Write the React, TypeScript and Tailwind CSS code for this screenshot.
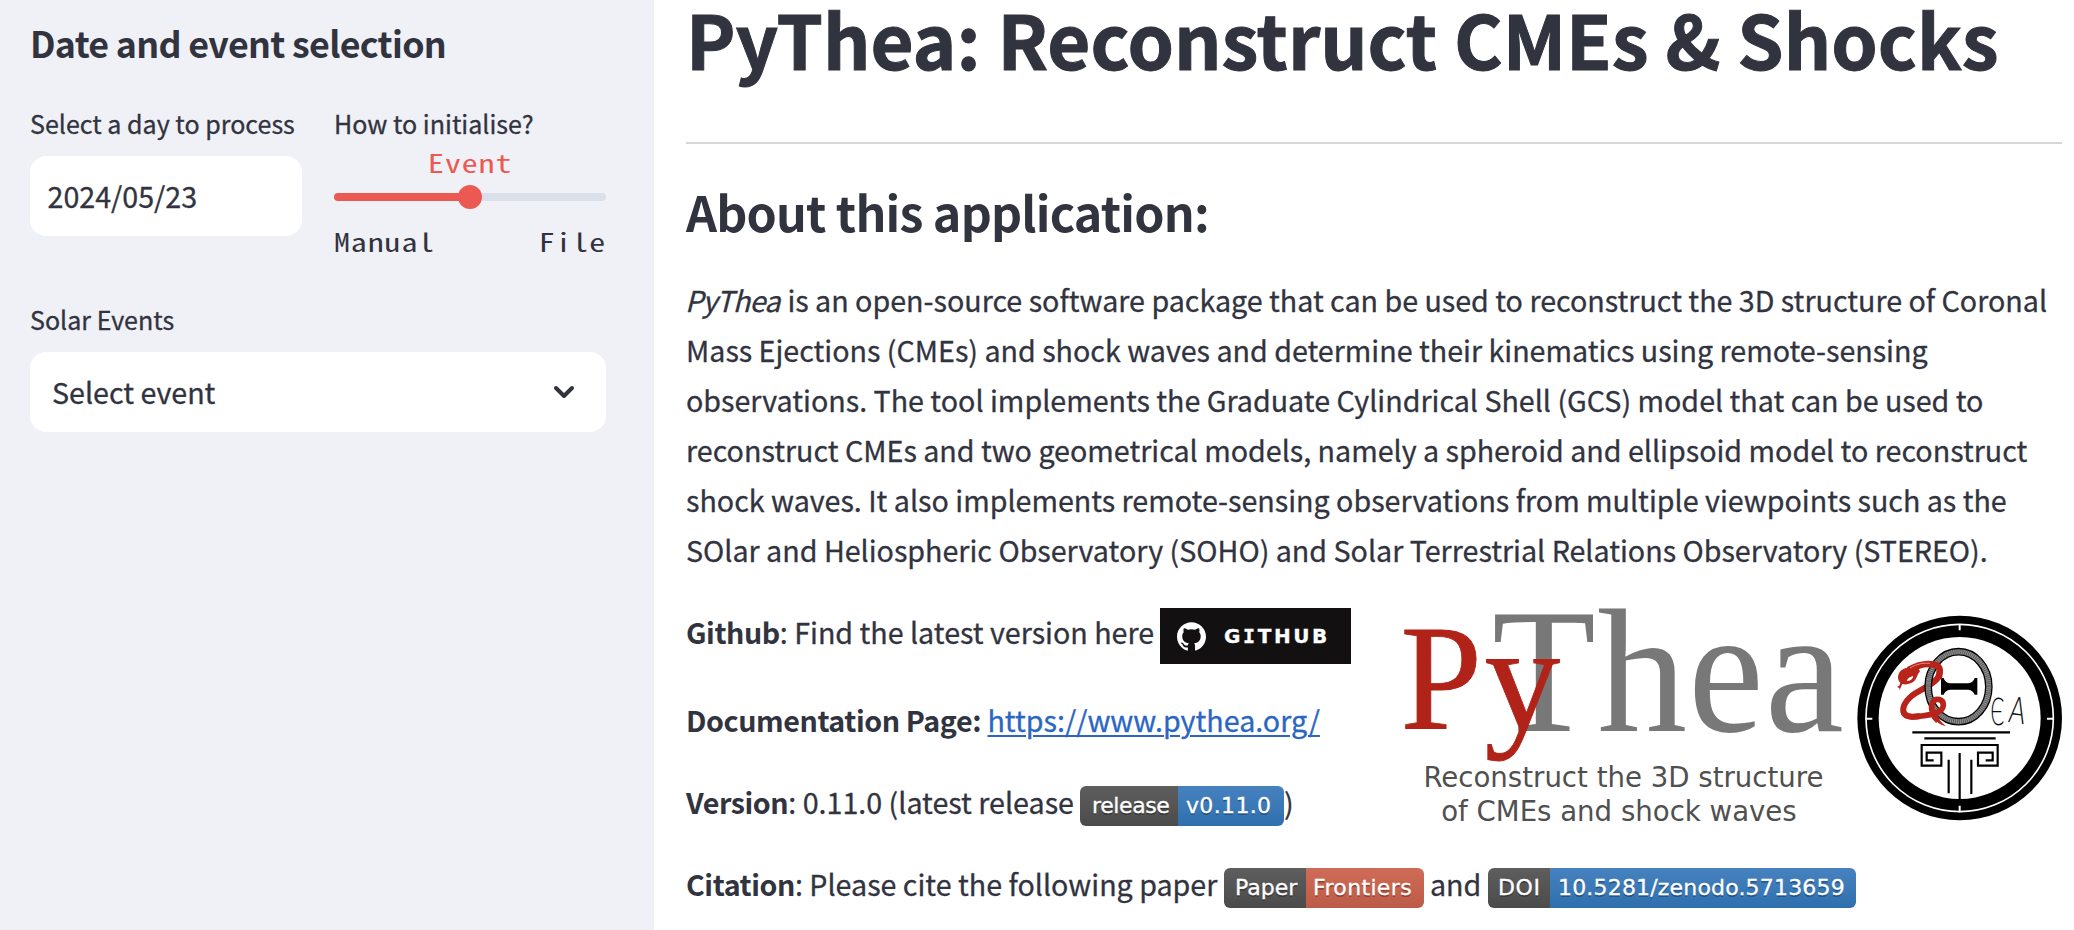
import type { ReactNode } from "react";
import { SiGithub } from "react-icons/si";

const ABOUT_LINES: ReactNode[] = [
  <>
    <em className="-ml-px inline-block w-[96px] tracking-[-0.6px]">PyThea</em>
    {" is an open-source software package that can be used to reconstruct the 3D structure of Coronal"}
  </>,
  "Mass Ejections (CMEs) and shock waves and determine their kinematics using remote-sensing",
  "observations. The tool implements the Graduate Cylindrical Shell (GCS) model that can be used to",
  "reconstruct CMEs and two geometrical models, namely a spheroid and ellipsoid model to reconstruct",
  "shock waves. It also implements remote-sensing observations from multiple viewpoints such as the",
  "SOlar and Heliospheric Observatory (SOHO) and Solar Terrestrial Relations Observatory (STEREO).",
];

function Strong({ children }: { children: ReactNode }) {
  return <strong className="font-bold tracking-[-0.42px] [-webkit-text-stroke:0]">{children}</strong>;
}

function Mono({ children, className }: { children: ReactNode; className: string }) {
  return (
    <span
      className={`inline-block scale-x-[1.27] font-['Noto_Sans_Mono_CJK_SC',monospace] text-[25.1px] leading-[34px] tracking-[0.72px] [-webkit-text-stroke:0] ${className}`}
    >
      {children}
    </span>
  );
}

function Badge({
  label,
  value,
  className,
  labelClass,
  valueClass,
}: {
  label: string;
  value: string;
  className: string;
  labelClass: string;
  valueClass: string;
}) {
  return (
    <span
      className={`flex h-10 shrink-0 overflow-hidden rounded-[6px] font-['DejaVu_Sans',sans-serif] text-[22px] leading-[40px] text-white [text-shadow:0_2px_0_rgba(1,1,1,0.3)] ${className}`}
    >
      <span className={`bg-linear-to-b from-[#5e5e5e] to-[#4b4b4b] ${labelClass}`}>{label}</span>
      <span className={`flex-1 bg-linear-to-b ${valueClass}`}>{value}</span>
    </span>
  );
}

function Wordmark() {
  return (
    <svg className="shrink-0" width="445" height="218" viewBox="1400 608 445 218" overflow="visible">
      <g fontFamily="'Liberation Serif', serif" fill="#787878">
        <text fontSize="178" transform="translate(1492 731) scale(0.955 1)">T</text>
        <text fontSize="180" transform="translate(1597.2 731) scale(0.997 0.982)">h</text>
        <text fontSize="180" transform="translate(1688.2 731) scale(0.943 1)">e</text>
        <text fontSize="180" transform="translate(1764.8 731) scale(0.99 1)">a</text>
      </g>
      <g fontFamily="'Liberation Serif', serif" fill="#b12318" fontSize="150" stroke="#b12318" strokeWidth="0.8">
        <text transform="translate(1400.6 728.7) scale(0.977 1)">P</text>
        <text transform="translate(1484.6 728.7) scale(1.01 1)">y</text>
      </g>
      <g fontFamily="'DejaVu Sans', sans-serif" fill="#505050" fontSize="27.6">
        <text x="1423.4" y="786.6">Reconstruct the 3D structure</text>
        <text x="1441.2" y="820.9">of CMEs and shock waves</text>
      </g>
    </svg>
  );
}

function Emblem() {
  return (
    <svg className="shrink-0" width="206" height="218" viewBox="48 24 618 654" fill="none">
      <circle cx="359" cy="354" r="307" fill="#000" />
      <circle cx="359" cy="354" r="281" stroke="#fff" strokeWidth="5" />
      <circle cx="359" cy="354" r="243" fill="#fff" />
      <path d="M359 72V91M359 617V637M77 356H97M621 356H642" stroke="#fff" strokeWidth="6" />

      <path d="M300 225C288 246 262 260 236 274C205 290 187 315 190 334C193 352 215 352 240 348" stroke="#b8231a" strokeWidth="18" />
      <ellipse cx="355.5" cy="260" rx="91" ry="105" stroke="#000" strokeWidth="23" />
      <ellipse cx="355.5" cy="260" rx="91" ry="105" stroke="#8c8c8c" strokeWidth="15" />
      <ellipse cx="355.5" cy="260" rx="91" ry="105" stroke="#4a4a4a" strokeWidth="15" strokeDasharray="2 4" />
      <path
        d="M303 234H311C315 246 324 250 334 250H381C391 250 400 246 404 234H412V284H404C400 273 391 269 381 269H334C324 269 315 273 311 284H303Z"
        fill="#000"
      />
      <path d="M206 210C232 195 262 189 284 194C305 200 300 219 295 234" stroke="#b8231a" strokeWidth="20" />
      <path d="M190 334C193 354 220 352 245 348C272 345 308 340 310 316C311 297 287 292 279 306C269 325 279 350 294 362" stroke="#b8231a" strokeWidth="17" />
      <path d="M273 340C280 358 297 375 318 379C306 369 298 360 293 349Z" fill="#b8231a" />
      <path
        d="M176 222C182 206 204 200 232 198L240 214C230 224 231 244 212 250C202 254 194 254 187 252L183 260L179 271L178 264L171 261L179 256L181 248C174 242 172 231 176 222Z"
        fill="#b8231a"
      />
      <path d="M200 243C203 234 211 230 220 228C218 238 211 243 200 243Z" fill="#fff" />
      <path d="M210 204C232 191 252 188 270 190" stroke="#f1c5c1" strokeWidth="2" />

      <g fontFamily="'DejaVu Sans', sans-serif" fontWeight="200" fill="#111">
        <text fontSize="110" transform="translate(450 374) scale(0.56 1)">Є</text>
        <text fontSize="108" transform="translate(502 366) rotate(8) scale(0.7 1)">A</text>
      </g>

      <path d="M217 397H510M253 415H467" stroke="#000" strokeWidth="7" />
      <path
        d="M281 481H260V458H304V497H245V435H473V497H414V458H458V481H437M326 479V580M359 459V600M394 479V582"
        stroke="#000"
        strokeWidth="6.5"
      />
    </svg>
  );
}

function Sidebar() {
  return (
    <aside className="w-[654px] shrink-0 bg-[#f0f1f6] px-[30px] pt-5">
      <h2 className="text-[35.8px] leading-[44px] font-bold tracking-[-0.7px] [-webkit-text-stroke:0]">
        Date and event selection
      </h2>
      <div className="mt-[41px] grid w-[576px] grid-cols-2 gap-8 text-[25.05px]">
        <div>
          <div className="leading-[36px] whitespace-nowrap">Select a day to process</div>
          <div className="mt-[15px] h-20 rounded-2xl bg-white pl-[17.5px] text-[28.65px] leading-[80px]">2024/05/23</div>
        </div>
        <div className="flex flex-col">
          <div className="leading-[36px]">How to initialise?</div>
          <Mono className="mt-[4px] self-center text-[#ec5953]">Event</Mono>
          <div className="mt-[6px] flex h-6 items-center">
            <div className="h-2 flex-1 rounded-l-full bg-[#ec5953]" />
            <div className="relative z-10 -mx-3 size-6 rounded-full bg-[#ec5953]" />
            <div className="h-2 flex-1 rounded-r-full bg-[#dae0e9]" />
          </div>
          <div className="mt-[15px] flex justify-between">
            <Mono className="origin-left">Manual</Mono>
            <Mono className="origin-right">File</Mono>
          </div>
        </div>
      </div>
      <div className="mt-[43px] text-[25.05px] leading-[36px]">Solar Events</div>
      <div className="mt-[15px] flex h-20 w-[576px] items-center justify-between rounded-2xl bg-white pr-[31px] pl-[22px] text-[28.65px]">
        <span>Select event</span>
        <svg width="22" height="16" viewBox="0 0 22 16" fill="none">
          <path d="M3 4L11 12L19 4" stroke="#31333f" strokeWidth="4" strokeLinecap="round" strokeLinejoin="round" />
        </svg>
      </div>
    </aside>
  );
}

export default function App() {
  return (
    <div className="flex h-[930px] w-[2074px] overflow-hidden bg-white font-['Noto_Sans_CJK_SC','Noto_Sans',sans-serif] text-[#31333f] [-webkit-text-stroke:0.3px]">
      <Sidebar />
      <main className="w-[1408px] pl-8">
        <h1 className="text-[74.3px] leading-[75px] font-bold whitespace-nowrap [-webkit-text-stroke:1px]">
          PyThea: Reconstruct CMEs &amp; Shocks
        </h1>
        <hr className="mt-[67px] h-0.5 border-0 bg-[#d5d6d8]" />
        <h2 className="mt-[37px] text-[48.4px] leading-[60px] font-bold tracking-[-0.8px] [-webkit-text-stroke:0]">
          About this application:
        </h2>
        <p className="mt-[34px] text-[28.65px] leading-[50px] whitespace-nowrap">
          {ABOUT_LINES.map((line, i) => (
            <span key={i} className="block">
              {line}
            </span>
          ))}
        </p>
        <div className="mt-[33px] flex h-[218px] justify-between text-[28.65px] leading-[50px] whitespace-nowrap">
          <div className="flex flex-col">
            <div className="flex h-14 gap-[5px]">
              <span className="-mt-px w-[469px]">
                <Strong>Github</Strong>: Find the latest version here
              </span>
              <span className="flex w-[191px] items-center bg-[#121011] pl-[17px] text-white">
                <SiGithub size={29} className="[stroke-width:0]" />
                <span className="ml-[18px] font-['DejaVu_Sans',sans-serif] text-[20px] leading-[56px] font-bold tracking-[2.6px]">
                  G<span className="font-['DejaVu_Sans_Mono',monospace]">I</span>THUB
                </span>
              </span>
            </div>
            <div className="mt-[31px]">
              <Strong>Documentation Page:</Strong>{" "}
              <a className="text-[#2b66c2] underline decoration-2 underline-offset-[3px]">https://www.pythea.org/</a>
            </div>
            <div className="mt-[31px] flex h-[51px]">
              <span className="w-[394px] pt-px">
                <Strong>Version</Strong>: 0.11.0 (latest release
              </span>
              <Badge
                label="release"
                value="v0.11.0"
                className="mt-2.5 w-[204px]"
                labelClass="w-[98px] pl-[12px] tracking-[-0.4px]"
                valueClass="from-[#4682bf] to-[#2f6fae] pl-[8px] tracking-[0.35px]"
              />
              <span className="pt-px">)</span>
            </div>
          </div>
          <div className="flex gap-[11px]">
            <Wordmark />
            <Emblem />
          </div>
        </div>
        <div className="mt-8 flex h-[51px] text-[28.65px] leading-[50px] whitespace-nowrap">
          <span className="w-[538px] pt-px">
            <Strong>Citation</Strong>: Please cite the following paper
          </span>
          <Badge
            label="Paper"
            value="Frontiers"
            className="mt-2.5 w-[200px]"
            labelClass="w-[82px] pl-[11px]"
            valueClass="from-[#cf6c57] to-[#bc5b47] pl-[7px] tracking-[0.35px]"
          />
          <span className="w-16 pt-px pl-[6px]">and</span>
          <Badge
            label="DOI"
            value="10.5281/zenodo.5713659"
            className="mt-2.5 w-[368px]"
            labelClass="w-[62px] pl-[10px] tracking-[0.6px]"
            valueClass="from-[#4682bf] to-[#2f6fae] pl-[8px] tracking-[0.18px]"
          />
        </div>
      </main>
    </div>
  );
}
